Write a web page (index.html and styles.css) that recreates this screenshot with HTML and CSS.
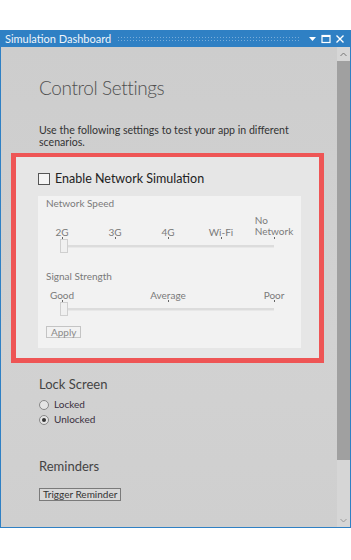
FILE: index.html
```html
<!DOCTYPE html>
<html lang="en">
<head>
    <meta charset="UTF-8">
    <meta name="viewport" content="width=device-width, initial-scale=1.0">
    <title>Simulation Dashboard</title>
    <link rel="stylesheet" href="styles.css">
</head>
<body>
    <div class="window">
        <div class="title-bar">
            <span class="title-text">Simulation Dashboard</span>
            <span class="grip"></span>
            <span class="title-btn">
                <svg width="9" height="9" viewBox="0 0 9 9"><path d="M1 3h7L4.5 7z" fill="#fff"/></svg>
            </span>
            <span class="title-btn">
                <svg width="10" height="10" viewBox="0 0 10 10"><rect x="1" y="1.5" width="8" height="7" fill="none" stroke="#fff" stroke-width="1.2"/><rect x="1" y="1" width="8" height="2" fill="#fff"/></svg>
            </span>
            <span class="title-btn">
                <svg width="10" height="10" viewBox="0 0 10 10"><path d="M1.5 1.5l7 7M8.5 1.5l-7 7" stroke="#fff" stroke-width="1.4"/></svg>
            </span>
        </div>
        <div class="body-row">
            <div class="content">
                <h1 class="page-title">Control Settings</h1>
                <p class="intro">Use the following settings to test your app in different scenarios.</p>

                <div class="sim-box">
                    <label class="check-row">
                        <span class="check-box"></span>
                        <span>Enable Network Simulation</span>
                    </label>
                    <div class="panel">
                        <div class="panel-label">Network Speed</div>
                        <div class="slider">
                            <div class="ticks ticks-tall">
                                <div class="tick"><span>2G</span><i></i></div>
                                <div class="tick"><span>3G</span><i></i></div>
                                <div class="tick"><span>4G</span><i></i></div>
                                <div class="tick"><span>Wi-Fi</span><i></i></div>
                                <div class="tick"><span class="two-line">No<br>Network</span><i></i></div>
                            </div>
                            <div class="track"><div class="thumb"></div></div>
                        </div>

                        <div class="panel-label signal-label">Signal Strength</div>
                        <div class="slider">
                            <div class="ticks">
                                <div class="tick"><span>Good</span><i></i></div>
                                <div class="tick"><span>Average</span><i></i></div>
                                <div class="tick"><span>Poor</span><i></i></div>
                            </div>
                            <div class="track"><div class="thumb"></div></div>
                        </div>

                        <button class="apply-button" disabled>Apply</button>
                    </div>
                </div>

                <div class="section">
                    <h2 class="section-title">Lock Screen</h2>
                    <label class="radio-row"><span class="radio"></span>Locked</label>
                    <label class="radio-row"><span class="radio checked"></span>Unlocked</label>
                </div>

                <div class="section reminders">
                    <h2 class="section-title">Reminders</h2>
                    <button class="plain-button">Trigger Reminder</button>
                </div>
            </div>
            <div class="scrollbar">
                <div class="scroll-arrow">
                    <svg width="7" height="5" viewBox="0 0 7 5"><path d="M0.5 4L3.5 1l3 3" fill="none" stroke="#777" stroke-width="1"/></svg>
                </div>
                <div class="scroll-thumb"></div>
                <div class="scroll-track"></div>
                <div class="scroll-arrow">
                    <svg width="7" height="5" viewBox="0 0 7 5"><path d="M0.5 1l3 3 3-3" fill="none" stroke="#999" stroke-width="1"/></svg>
                </div>
            </div>
        </div>
    </div>
</body>
</html>
```

FILE: styles.css
```css
body { margin: 0; background: #fff; font-family: Lato, "Open Sans", sans-serif; }
.window { margin-top: 30px; width: 349px; height: 497px; border: 1px solid #2f80c4; border-top: none; display: flex; flex-direction: column; }
.title-bar { height: 17px; background: #2f80c4; color: #eef4fa; display: flex; align-items: center; font-size: 11px; padding: 0 3px 0 4px; }
.title-text { white-space: nowrap; }
.grip {
    flex: 1;
    height: 5px;
    margin: 0 6px 0 6px;
    background-image: radial-gradient(circle, rgba(255,255,255,0.35) 0.6px, transparent 0.8px);
    background-size: 3px 3px;
}
.title-btn { width: 14px; height: 14px; display: flex; align-items: center; justify-content: center; }

.body-row { flex: 1; display: flex; min-height: 0; }
.content { flex: 1; background: linear-gradient(180deg, #cdcdcd, #d2d2d2 60%, #cfcfcf); padding: 0 13px 0 10px; overflow: hidden; }

.page-title { margin: 29px 0 0 28px; font-size: 19px; letter-spacing: -0.4px; line-height: 24px; font-weight: 300; color: #505050; }
.intro { margin: 24px 0 0 28px; font-size: 10.6px; line-height: 12px; color: #333; width: 270px; }

.sim-box { margin-top: 5px; border: 5px solid #ee5555; border-top-width: 4px; background: #e6e6e6; padding: 13px 18px 10px 22px; }
.check-row { display: flex; align-items: center; gap: 5px; font-size: 12.5px; line-height: 18px; color: #222; }
.check-box { width: 10px; height: 10px; border: 1px solid #555; background: #f4f4f4; }

.panel { margin-top: 8px; background: #f2f2f2; padding: 1px 8px 10px 8px; color: #7a7a7a; font-size: 10px; }
.panel-label { line-height: 12px; }
.signal-label { margin-top: 17px; }

.slider { margin-left: 16px; width: 212px; }
.ticks { display: flex; justify-content: space-between; align-items: flex-end; margin-top: 8px; }
.ticks-tall { margin-top: 6px; }
.tick { width: 0; display: flex; flex-direction: column; align-items: center; }
.tick span { white-space: nowrap; text-align: center; line-height: 10px; }
.tick .two-line { text-align: left; line-height: 11px; }
.tick i { width: 1px; height: 2px; background: #666; }
.track { position: relative; height: 14px; padding-top: 6px; box-sizing: border-box; }
.track::before { content: ""; display: block; height: 2px; background: #dcdcdc; border-bottom: 1px solid #e8e8e8; }
.thumb { position: absolute; left: -2px; top: 0; width: 6px; height: 12px; background: #f0f0f0; border: 1px solid #cfcfcf; }

.apply-button { margin-top: 10px; font: inherit; font-size: 10px; line-height: 10px; color: #8a8a8a; background: #f2f2f2; border: 1px solid #c4c4c4; padding: 0 4px; height: 12px; display: block; }

.section { margin-left: 28px; }
.section-title { margin: 12px 0 4px 0; font-size: 13px; line-height: 18px; font-weight: normal; color: #444; }
.radio-row { display: flex; align-items: center; gap: 5px; font-size: 10px; line-height: 15px; color: #3a3040; }
.radio { width: 8px; height: 8px; border: 1px solid #888; border-radius: 50%; background: #e4e4e4; display: flex; align-items: center; justify-content: center; }
.radio.checked::after { content: ""; width: 4px; height: 4px; border-radius: 50%; background: #333; }
.reminders .section-title { margin-top: 30px; margin-bottom: 7px; }
.plain-button { font: inherit; font-size: 10px; line-height: 11px; color: #333; background: #d8d8d8; border: 1px solid #7a7a7a; padding: 0 3px; height: 13px; }

.scrollbar { width: 13px; display: flex; flex-direction: column; background: #d6d6d6; }
.scroll-arrow { height: 14px; display: flex; align-items: center; justify-content: center; }
.scroll-thumb { height: 399px; background: #a0a0a0; }
.scroll-track { flex: 1; }
```
